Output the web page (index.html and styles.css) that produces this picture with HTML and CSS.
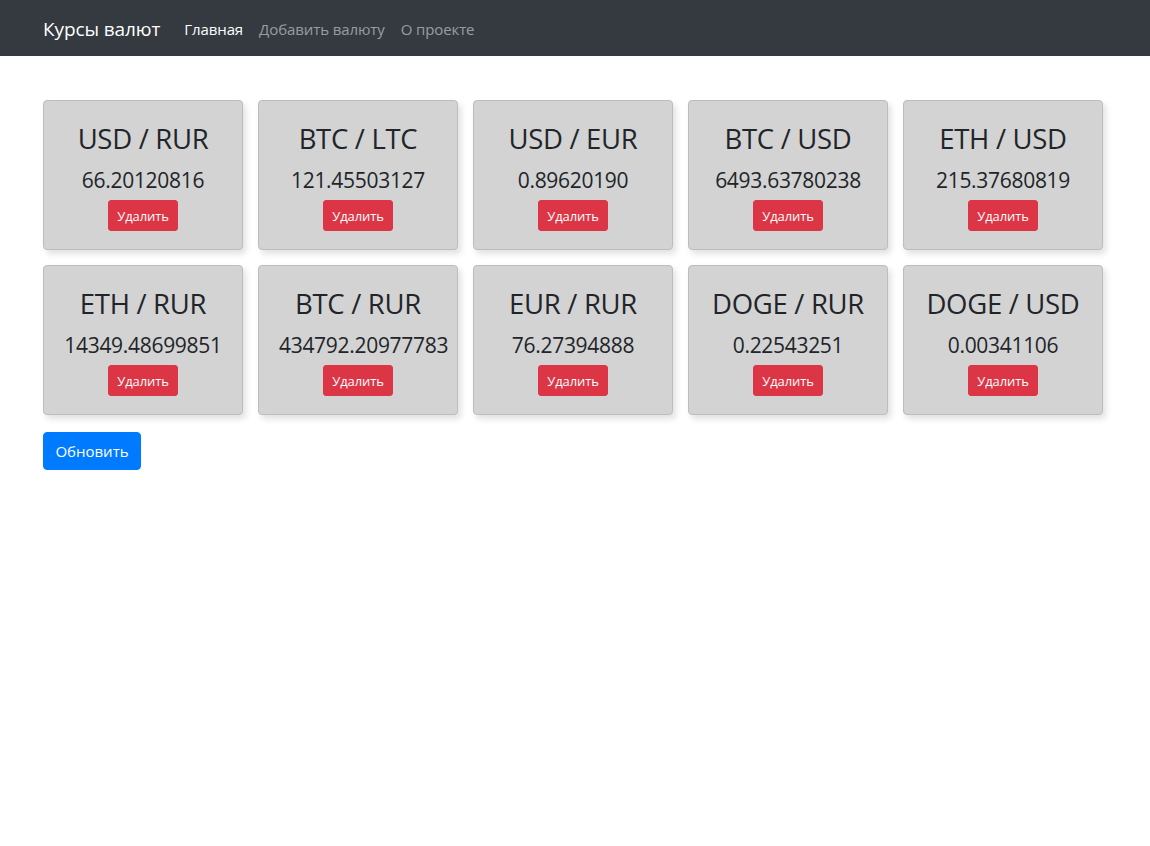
FILE: index.html
```html
<!DOCTYPE html>
<html lang="ru">
<head>
<meta charset="utf-8">
<title>Курсы валют</title>
<link rel="stylesheet" href="styles.css">
</head>
<body>
<nav class="navbar">
  <a class="brand" href="#">Курсы валют</a>
  <ul class="nav">
    <li><a class="nav-link active" href="#">Главная</a></li>
    <li><a class="nav-link" href="#">Добавить валюту</a></li>
    <li><a class="nav-link" href="#">О проекте</a></li>
  </ul>
</nav>
<main class="content">
  <div class="cards">
    <div class="card"><h3 class="pair">USD / RUR</h3><div class="rate">66.20120816</div><button class="btn-del">Удалить</button></div>
    <div class="card"><h3 class="pair">BTC / LTC</h3><div class="rate">121.45503127</div><button class="btn-del">Удалить</button></div>
    <div class="card"><h3 class="pair">USD / EUR</h3><div class="rate">0.89620190</div><button class="btn-del">Удалить</button></div>
    <div class="card"><h3 class="pair">BTC / USD</h3><div class="rate">6493.63780238</div><button class="btn-del">Удалить</button></div>
    <div class="card"><h3 class="pair">ETH / USD</h3><div class="rate">215.37680819</div><button class="btn-del">Удалить</button></div>
    <div class="card"><h3 class="pair">ETH / RUR</h3><div class="rate">14349.48699851</div><button class="btn-del">Удалить</button></div>
    <div class="card"><h3 class="pair">BTC / RUR</h3><div class="rate">434792.20977783</div><button class="btn-del">Удалить</button></div>
    <div class="card"><h3 class="pair">EUR / RUR</h3><div class="rate">76.27394888</div><button class="btn-del">Удалить</button></div>
    <div class="card"><h3 class="pair">DOGE / RUR</h3><div class="rate">0.22543251</div><button class="btn-del">Удалить</button></div>
    <div class="card"><h3 class="pair">DOGE / USD</h3><div class="rate">0.00341106</div><button class="btn-del">Удалить</button></div>
  </div>
  <button class="btn-refresh">Обновить</button>
</main>
</body>
</html>
```
FILE: styles.css
```css
* { box-sizing: border-box; }
html, body { margin: 0; padding: 0; }
body {
  font-family: "Open Sans", "Noto Sans", sans-serif;
  color: #212529;
  background: #fff;
  font-size: 16px;
  line-height: 1.5;
}
.navbar {
  height: 56px;
  background: #343a40;
  display: flex;
  align-items: center;
  padding: 2px 43px 0;
}
.brand {
  color: #fff;
  font-size: 19px;
  text-decoration: none;
  margin-right: 16px;
  letter-spacing: -0.1px;
}
.nav {
  display: flex;
  list-style: none;
  margin: 0;
  padding: 0;
}
.nav-link {
  display: block;
  padding: 8px 8px;
  font-size: 15px;
  color: rgba(255,255,255,.5);
  text-decoration: none;
  letter-spacing: -0.1px;
}
.nav-link.active { color: #fff; }
.content {
  padding: 44px 43px 0;
}
.cards {
  display: grid;
  grid-template-columns: repeat(5, 200px);
  column-gap: 15px;
  row-gap: 15px;
}
.card {
  height: 150px;
  background: #d3d3d3;
  border: 1px solid #bdbdbd;
  border-radius: 4px;
  box-shadow: 3px 4px 6px rgba(0,0,0,.12);
  padding: 21px 20px 0;
  text-align: center;
}
.pair {
  margin: 0;
  font-size: 27.5px;
  font-weight: 400;
  line-height: 33px;
  letter-spacing: -0.3px;
  white-space: nowrap;
}
.rate {
  margin-top: 13px;
  font-size: 21px;
  line-height: 25px;
  letter-spacing: -0.3px;
  white-space: nowrap;
}
.btn-del {
  display: inline-block;
  margin-top: 7px;
  height: 31px;
  padding: 0 8px;
  font-family: inherit;
  font-size: 13px;
  color: #fff;
  background: #dc3545;
  border: 1px solid #dc3545;
  border-radius: 3px;
  letter-spacing: -0.1px;
  vertical-align: top;
}
.btn-refresh {
  margin-top: 17px;
  height: 38px;
  width: 98px;
  padding: 0;
  font-family: inherit;
  font-size: 15px;
  color: #fff;
  background: #007bff;
  border: 1px solid #007bff;
  border-radius: 4px;
}
```
